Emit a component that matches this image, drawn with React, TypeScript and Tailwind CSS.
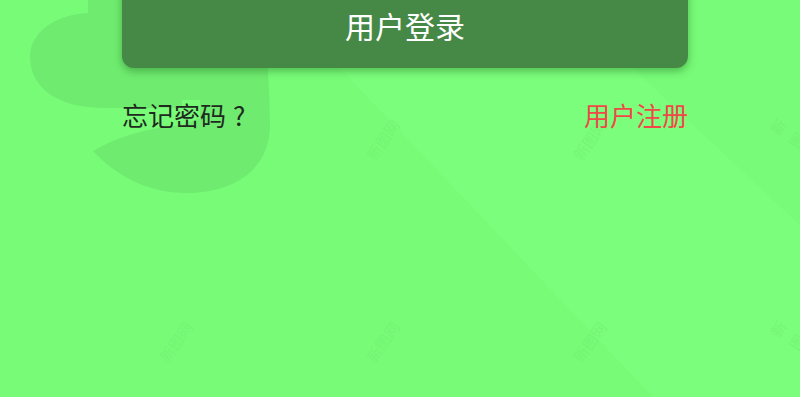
import React from "react";

const FONT = '"Noto Sans CJK SC", "Noto Sans", sans-serif';

const MARKS = [
  [176, 140],
  [383, 140],
  [590, 140],
  [797, 140],
  [176, 342],
  [383, 342],
  [590, 342],
  [797, 342],
];

function Backdrop() {
  return (
    <svg
      className="absolute inset-0 h-full w-full"
      viewBox="0 0 800 397"
      preserveAspectRatio="none"
    >
      <rect width="800" height="397" fill="#78fc78" />
      {/* diagonal light bands */}
      <polygon points="275,0 800,0 800,397 653,397" fill="#7bfe7b" />
      <polygon points="560,0 800,0 800,225" fill="#78fb78" />
      {/* big faint "3" */}
      <path
        d="M88,0 V13 C52,15 30,34 30,57 C30,88 58,108 104,108 L182,108 L182,70 L200,70 L200,0 Z"
        fill="#6fec6f"
      />
      <path
        d="M200,0 L262,0 C266,40 270,90 270,125 C270,168 236,193 186,193 C148,193 116,176 93,151 C118,136 148,128 182,125 L200,118 L200,100 L182,100 L182,70 L200,70 Z"
        fill="#6fec6f"
      />
    </svg>
  );
}

export default function App() {
  return (
    <div
      className="relative h-[397px] w-[800px] overflow-hidden"
      style={{ fontFamily: FONT }}
    >
      <Backdrop />
      {MARKS.map(([x, y]) => (
        <span
          key={`${x}-${y}`}
          className="pointer-events-none absolute -translate-x-1/2 -translate-y-1/2 -rotate-[55deg] text-[15px] text-[#70ee70]/50"
          style={{ left: x, top: y }}
        >
          新图网
        </span>
      ))}

      <div className="relative ml-[122px] flex w-[566px] flex-col">
        <button
          type="button"
          className="-mt-[18px] flex h-[86px] w-full items-center justify-center rounded-[12px] bg-[#468946] text-[30px] leading-none text-white shadow-[0_3px_8px_rgba(0,60,0,0.35)]"
        >
          用户登录
        </button>
        <div className="mt-[32px] flex items-center justify-between text-[26px] leading-[30px]">
          <span className="text-[#1f2a1f]">
            忘记密码<span className="ml-[7px]">?</span>
          </span>
          <span className="text-[#f04848]">用户注册</span>
        </div>
      </div>
    </div>
  );
}
